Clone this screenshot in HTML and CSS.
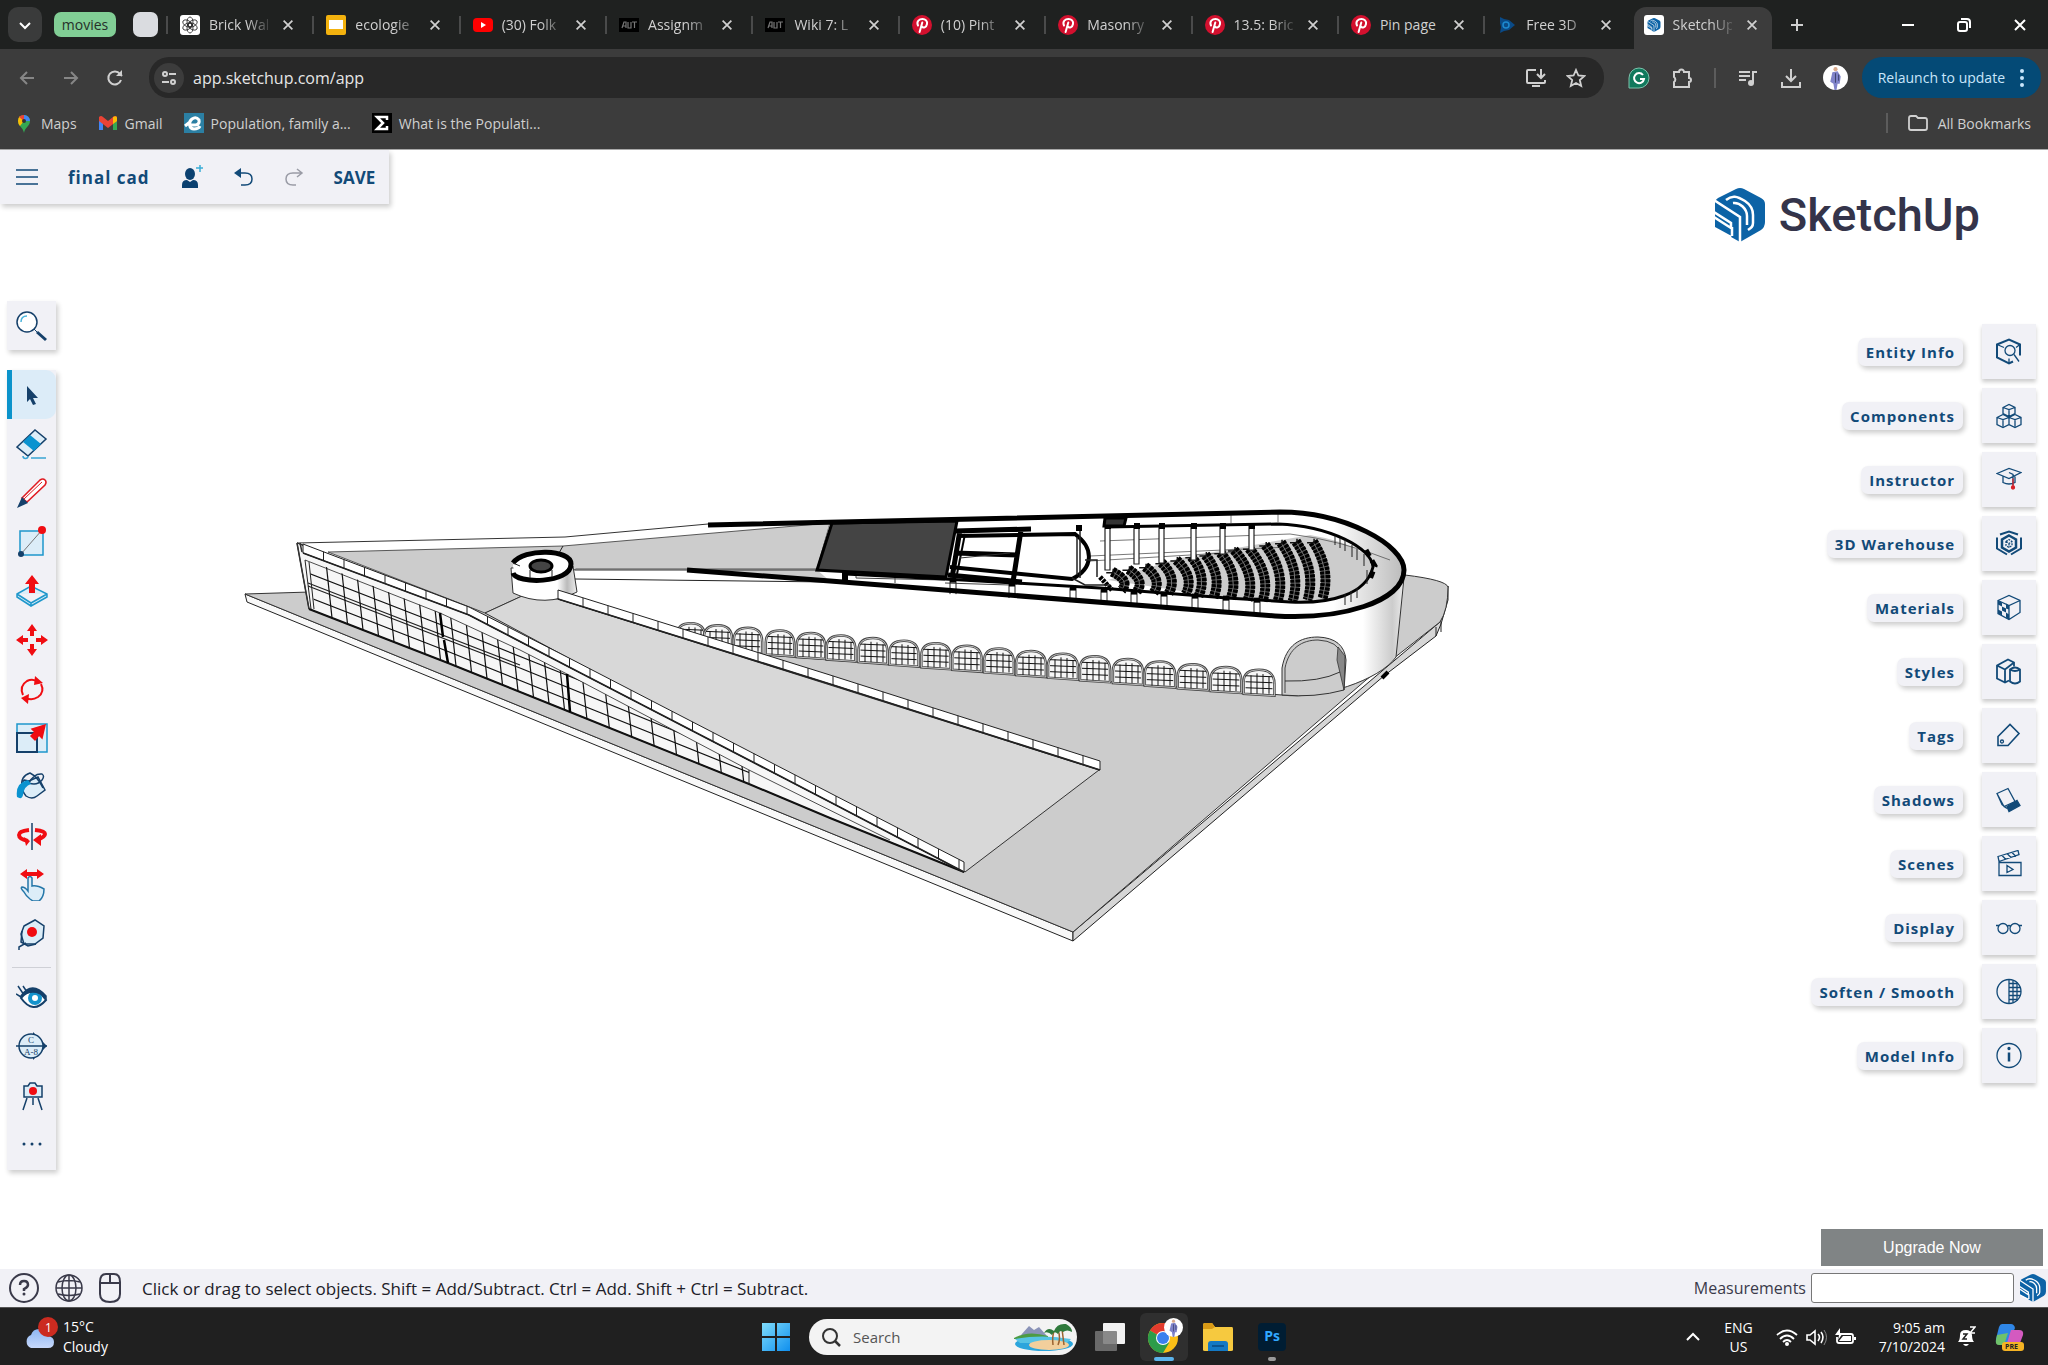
FILE: index.html
```html
<!DOCTYPE html>
<html lang="en">
<head>
    <meta charset="UTF-8">
    <meta name="viewport" content="width=device-width, initial-scale=1.0">
    <title>SketchUp</title>
    <link rel="stylesheet" href="styles.css">
</head>
<body>
    <!-- Shared symbols -->
    <svg class="defs" aria-hidden="true">
        <symbol id="close" viewBox="0 0 16 16"><path d="M3 3l10 10M13 3L3 13" stroke="currentColor" stroke-width="2" fill="none"/></symbol>
        <symbol id="pin" viewBox="0 0 20 20">
            <circle cx="10" cy="10" r="10" fill="#d3102e"/>
            <path d="M6 10.500C4 6 7.500 4 10.500 4s5 2.200 4.500 5c-.6 3.500-4 4.500-5 2.500M10.300 7.500L7.600 17" fill="none" stroke="#fff" stroke-width="2" stroke-linecap="round"/>
        </symbol>
        <symbol id="su" viewBox="0 0 50 54">
            <path d="M21 1q4-2 8 0l17 9q4 2 4 6v18q0 5-4 8L25 54 0 40V14q0-2 3-4z" fill="#0c63a6"/>
            <path d="M-1 12l26 17v26M-1 24l17 11v5L-1 29M-1 40l17 9M17 39v9M11 12c6-5 11-4 19 1 6 4 8 8 8 14v8c0 4-2 5-5 7M18 15c7-1 14 6 14 13v9" fill="none" stroke="#fff" stroke-width="2.500"/>
        </symbol>
        <symbol id="aut" viewBox="0 0 20 20">
            <rect y="3" width="20" height="14" fill="#000"/>
            <path d="M3 13l2-6h2v6M4 11h3M9 7v6h3V7M13 7h5M15.500 7v6" stroke="#777" stroke-width="1.200" fill="none"/>
        </symbol>
        <symbol id="person" viewBox="0 0 24 24">
            <circle cx="12" cy="12" r="12" fill="#fff"/>
            <path d="M9 7l5-1 3 5-1 7h-2l-1 6h-2l-1-6-3-2z" fill="#7f83c9"/>
            <circle cx="12" cy="4" r="2" fill="#d9a98b"/>
            <path d="M12 8v9M15 9v6" stroke="#3f4470" stroke-width="1"/>
        </symbol>
    </svg>

    <!-- Browser window -->
    <header class="browser">
        <div class="tab-strip">
            <button class="tab-search" aria-label="Search tabs"><svg width="14" height="14" viewBox="0 0 14 14"><path d="M2 5l5 5 5-5" fill="none" stroke="currentColor" stroke-width="2"/></svg></button>
            <span class="group">movies</span>
            <span class="group group-empty"></span>
            <div class="tabs">
                <div class="tab">
                    <svg class="fav" viewBox="0 0 20 20"><rect width="20" height="20" rx="3" fill="#fff"/><g fill="none" stroke="#222" stroke-width=".8"><ellipse cx="10" cy="7" rx="3" ry="5"/><ellipse cx="10" cy="7" rx="3" ry="5" transform="rotate(60 10 10)"/><ellipse cx="10" cy="7" rx="3" ry="5" transform="rotate(120 10 10)"/><ellipse cx="10" cy="7" rx="3" ry="5" transform="rotate(180 10 10)"/><ellipse cx="10" cy="7" rx="3" ry="5" transform="rotate(240 10 10)"/><ellipse cx="10" cy="7" rx="3" ry="5" transform="rotate(300 10 10)"/></g></svg>
                    <span class="tab-title">Brick Wal</span>
                    <button class="tab-close" aria-label="Close tab"><svg><use href="#close"/></svg></button>
                </div>
                <div class="tab">
                    <svg class="fav" viewBox="0 0 20 20"><rect width="20" height="20" rx="2" fill="#f3b20e"/><rect x="3" y="5" width="14" height="9" fill="#fff"/></svg>
                    <span class="tab-title">ecologie</span>
                    <button class="tab-close" aria-label="Close tab"><svg><use href="#close"/></svg></button>
                </div>
                <div class="tab">
                    <svg class="fav" viewBox="0 0 20 20"><rect y="3" width="20" height="14" rx="4" fill="#f00"/><path d="M8 7l5 3-5 3z" fill="#fff"/></svg>
                    <span class="tab-title">(30) Folk</span>
                    <button class="tab-close" aria-label="Close tab"><svg><use href="#close"/></svg></button>
                </div>
                <div class="tab">
                    <svg class="fav"><use href="#aut"/></svg>
                    <span class="tab-title">Assignm</span>
                    <button class="tab-close" aria-label="Close tab"><svg><use href="#close"/></svg></button>
                </div>
                <div class="tab">
                    <svg class="fav"><use href="#aut"/></svg>
                    <span class="tab-title">Wiki 7: L</span>
                    <button class="tab-close" aria-label="Close tab"><svg><use href="#close"/></svg></button>
                </div>
                <div class="tab">
                    <svg class="fav"><use href="#pin"/></svg>
                    <span class="tab-title">(10) Pint</span>
                    <button class="tab-close" aria-label="Close tab"><svg><use href="#close"/></svg></button>
                </div>
                <div class="tab">
                    <svg class="fav"><use href="#pin"/></svg>
                    <span class="tab-title">Masonry</span>
                    <button class="tab-close" aria-label="Close tab"><svg><use href="#close"/></svg></button>
                </div>
                <div class="tab">
                    <svg class="fav"><use href="#pin"/></svg>
                    <span class="tab-title">13.5: Bric</span>
                    <button class="tab-close" aria-label="Close tab"><svg><use href="#close"/></svg></button>
                </div>
                <div class="tab">
                    <svg class="fav"><use href="#pin"/></svg>
                    <span class="tab-title whole">Pin page</span>
                    <button class="tab-close" aria-label="Close tab"><svg><use href="#close"/></svg></button>
                </div>
                <div class="tab">
                    <svg class="fav" viewBox="0 0 20 20"><path d="M3 2l4 2 5 1 6 5-6 5-5 1-4 2 1-6-1-4z" fill="#0a4a86"/><circle cx="9" cy="10" r="3" fill="none" stroke="#1d8ad0" stroke-width="1.500"/></svg>
                    <span class="tab-title">Free 3D</span>
                    <button class="tab-close" aria-label="Close tab"><svg><use href="#close"/></svg></button>
                </div>
                <div class="tab active">
                    <svg class="fav" viewBox="0 0 20 20"><rect width="20" height="20" rx="3" fill="#fff"/><use href="#su" x="3" y="3" width="14" height="14"/></svg>
                    <span class="tab-title">SketchUp</span>
                    <button class="tab-close" aria-label="Close tab"><svg><use href="#close"/></svg></button>
                </div>
            </div>
            <button class="new-tab" aria-label="New tab"><svg width="14" height="14" viewBox="0 0 14 14"><path d="M7 1v12M1 7h12" stroke="currentColor" stroke-width="2"/></svg></button>
            <div class="window-buttons">
                <button aria-label="Minimize"><svg width="14" height="14" viewBox="0 0 14 14"><path d="M1 7h12" stroke="currentColor" stroke-width="2"/></svg></button>
                <button aria-label="Restore"><svg width="14" height="14" viewBox="0 0 14 14"><g fill="none" stroke="currentColor" stroke-width="2"><rect x="1" y="4" width="9" height="9" rx="2"/><path d="M4 1h6q3 0 3 3v6"/></g></svg></button>
                <button aria-label="Close"><svg width="16" height="16"><use href="#close"/></svg></button>
            </div>
        </div>

        <div class="address-bar">
            <button class="nav dim" aria-label="Back"><svg width="20" height="20" viewBox="0 0 20 20"><path d="M17 10H4M10 4l-6 6 6 6" fill="none" stroke="currentColor" stroke-width="2"/></svg></button>
            <button class="nav dim" aria-label="Forward"><svg width="20" height="20" viewBox="0 0 20 20"><path d="M3 10h13M10 4l6 6-6 6" fill="none" stroke="currentColor" stroke-width="2"/></svg></button>
            <button class="nav" aria-label="Reload"><svg width="20" height="20" viewBox="0 0 20 20"><path d="M16 12a6.500 6.500 0 1 1-1-6l2 2" fill="none" stroke="currentColor" stroke-width="2"/><path d="M17 2v6h-6z" fill="currentColor"/></svg></button>
            <div class="omnibox">
                <button class="site-info" aria-label="View site information"><svg width="18" height="18" viewBox="0 0 18 18"><g fill="none" stroke="currentColor" stroke-width="2"><circle cx="5" cy="5" r="2"/><path d="M9 5h7M2 13h7"/><circle cx="13" cy="13" r="2"/></g></svg></button>
                <input type="text" value="app.sketchup.com/app" aria-label="Address">
                <button class="nav" aria-label="Install app"><svg width="22" height="22" viewBox="0 0 22 22"><path d="M11 3H3q-1 0-1 1v11q0 1 1 1h16q1 0 1-1v-2M7 19h8M16 2v8M12 7l4 4 4-4" fill="none" stroke="currentColor" stroke-width="2"/></svg></button>
                <button class="nav" aria-label="Bookmark this tab"><svg width="20" height="20" viewBox="0 0 20 20"><path d="M10 2l2.400 5.500 6 .5-4.600 4 1.400 6L10 15l-5.200 3 1.400-6-4.600-4 6-.5z" fill="none" stroke="currentColor" stroke-width="1.800"/></svg></button>
            </div>
            <div class="extensions">
                <button aria-label="Grammarly"><svg width="22" height="22" viewBox="0 0 22 22"><path d="M1 21V11a10 10 0 1 1 10 10z" fill="#11795d" stroke="#7cc3ac" stroke-width="1"/><path d="M15 8a5 5 0 1 0 1 4h-4" fill="none" stroke="#fff" stroke-width="2"/></svg></button>
                <button aria-label="Extensions"><svg width="22" height="22" viewBox="0 0 22 22"><path d="M3 5h5a2.500 2.500 0 0 1 5 0h5v6a2 2 0 0 1 0 4v5H3v-5a3 3 0 0 0 0-5z" fill="none" stroke="currentColor" stroke-width="2"/></svg></button>
                <span class="divider"></span>
                <button aria-label="Media"><svg width="22" height="22" viewBox="0 0 22 22"><path d="M2 5h11M2 9h11M2 13h7M16 16V5h4" fill="none" stroke="currentColor" stroke-width="2"/><circle cx="14" cy="16" r="3" fill="currentColor"/></svg></button>
                <button aria-label="Downloads"><svg width="22" height="22" viewBox="0 0 22 22"><path d="M11 2v11M6 9l5 5 5-5M2 15v5h18v-5" fill="none" stroke="currentColor" stroke-width="2"/></svg></button>
                <button aria-label="Profile"><svg width="25" height="25"><use href="#person"/></svg></button>
            </div>
            <button class="relaunch">Relaunch to update <svg width="6" height="20" viewBox="0 0 6 20"><g fill="currentColor"><circle cx="3" cy="3" r="2"/><circle cx="3" cy="10" r="2"/><circle cx="3" cy="17" r="2"/></g></svg></button>
        </div>

        <nav class="bookmarks">
            <a href="#"><svg width="20" height="20" viewBox="0 0 20 20"><path d="M10 20c-1-6-6-7-6-12a6 6 0 0 1 12 0c0 5-5 6-6 12z" fill="#34a853"/><path d="M4 8a6 6 0 0 1 2-5l4 5-4 5q-2-2-2-5z" fill="#fbbc04"/><path d="M5 4a6 6 0 0 1 5-2v6z" fill="#ea4335"/><path d="M10 2a6 6 0 0 1 6 6h-6z" fill="#4285f4"/><circle cx="10" cy="8" r="2" fill="#333"/></svg>Maps</a>
            <a href="#"><svg width="20" height="20" viewBox="0 0 20 20"><path d="M1 17V5h4v12z" fill="#4285f4"/><path d="M15 17V5h4v12z" fill="#34a853"/><path d="M1 8V4q2-2 4 0l5 4 5-4q2-2 4 0v4l-9 7z" fill="#ea4335"/><path d="M15 4q4-2 4 1v3l-4 3z" fill="#fbbc04"/></svg>Gmail</a>
            <a href="#"><svg width="20" height="20" viewBox="0 0 20 20"><rect width="20" height="20" fill="#2b7fa3"/><path d="M5 12h7q4-1 3-5-3-4-7-1c-4 3-3 10 2 10 3 0 5-1 6-3M1 13l5-4" fill="none" stroke="#fff" stroke-width="3"/></svg>Population, family a...</a>
            <a href="#"><svg width="20" height="20" viewBox="0 0 20 20"><rect width="20" height="20" fill="#000"/><path d="M15 7V4H5l6 6-6 6h10v-3" fill="none" stroke="#fff" stroke-width="2.500"/></svg>What is the Populati...</a>
            <span class="divider"></span>
            <a href="#" class="all"><svg width="20" height="20" viewBox="0 0 20 20"><path d="M1 5q0-2 2-2h5l2 2h7q2 0 2 2v8q0 2-2 2H3q-2 0-2-2z" fill="none" stroke="currentColor" stroke-width="1.800"/></svg>All Bookmarks</a>
        </nav>
    </header>

    <!-- SketchUp -->
    <main class="app">
        <svg class="model" id="model" viewBox="0 150 2048 1119" role="img" aria-label="final cad model"></svg>

        <div class="app-bar">
            <button aria-label="Menu"><svg width="22" height="16" viewBox="0 0 22 16"><path d="M0 1h22M0 8h22M0 15h22" stroke="currentColor" stroke-width="1.500"/></svg></button>
            <h1>final cad</h1>
            <button aria-label="Share"><svg width="24" height="24" viewBox="0 0 24 24"><ellipse cx="10" cy="9" rx="5" ry="6" fill="#0b4170"/><path d="M2 23v-3q0-5 5-5l3 2 3-2q5 0 5 5v3z" fill="#0b4170"/><path d="M20 0v7M16 3h7" stroke="#3badd6" stroke-width="1.500"/></svg></button>
            <button aria-label="Undo"><svg width="20" height="20" viewBox="0 0 20 20"><path d="M3 6h8q7 0 7 6t-7 6H7" fill="none" stroke="currentColor" stroke-width="1.500"/><path d="M7 1v10L0 6z" fill="currentColor"/></svg></button>
            <button class="redo" aria-label="Redo"><svg width="20" height="20" viewBox="0 0 20 20"><path d="M17 6H9q-7 0-7 6t7 6h3M13 2l5 4-5 4" fill="none" stroke="currentColor" stroke-width="1.500"/></svg></button>
            <button class="save">SAVE</button>
        </div>

        <div class="brand"><svg width="50" height="54"><use href="#su"/></svg>SketchUp</div>

        <div class="tools">
            <button class="tool tool-search" aria-label="Search"><svg viewBox="0 0 32 32"><circle cx="11" cy="12" r="10" fill="#fff" stroke="#15406a" stroke-width="1.500"/><path d="M5 12q0-6 6-6" fill="none" stroke="#4bb4dc" stroke-width="1.500"/><path d="M18 19l4 4" stroke="#15406a"/><path d="M21 22l9 8" stroke="#15406a" stroke-width="3"/></svg></button>
            <div class="tool-list">
                <button class="tool selected" aria-label="Select"><svg viewBox="0 0 32 32"><path d="M11 7v16l3-3 3 6 3-1-3-6h5z" fill="#15406a"/></svg></button>
                <button class="tool" aria-label="Eraser"><svg viewBox="0 0 32 32"><path d="M1 19L19 2l11 9-18 17z" fill="#dcedf8" stroke="#15406a" stroke-width="1.500"/><path d="M7 14l7-7 11 9-7 7z" fill="#0a93d0"/><path d="M15 30h15M7 28a2 2 0 1 0 5 0" fill="none" stroke="#3aa5d4" stroke-width="1.500"/></svg></button>
                <button class="tool" aria-label="Line"><svg viewBox="0 0 32 32"><path d="M6 21L24 3q3-2 5 0t0 5L11 25z" fill="#fff" stroke="#e01b22" stroke-width="1.600"/><path d="M8 22L26 5" stroke="#e01b22"/><path d="M6 20l6 6-11 5z" fill="#15406a"/></svg></button>
                <button class="tool" aria-label="Rectangle"><svg viewBox="0 0 32 32"><path d="M4 5h23v24H4z" fill="#dcedf8" stroke="#1e97cb" stroke-width="1.500"/><path d="M5 28L26 4" stroke="#777"/><circle cx="26" cy="4" r="4" fill="#f00d12"/><circle cx="5" cy="28" r="3" fill="#15406a"/></svg></button>
                <button class="tool" aria-label="Push/Pull"><svg viewBox="0 0 32 32"><path d="M1 19l14-8 16 8v3l-16 9-14-9zM1 19l14 9 16-9M15 28v3" fill="#dcedf8" stroke="#1e97cb" stroke-width="1.500"/><path d="M13 18V9H9l7-9 7 9h-4v9z" fill="#f00d12"/></svg></button>
                <button class="tool" aria-label="Move"><svg viewBox="0 0 32 32"><path id="mv" d="M14 12V7h-3l5-7 5 7h-3v5z" fill="#f00d12"/><use href="#mv" transform="rotate(90 16 16)"/><use href="#mv" transform="rotate(180 16 16)"/><use href="#mv" transform="rotate(270 16 16)"/></svg></button>
                <button class="tool" aria-label="Rotate"><svg viewBox="0 0 32 32"><path d="M7 22q-4-9 4-14 6-3 11 1M25 11q4 8-3 13-6 4-12 1" fill="none" stroke="#f00d12" stroke-width="2"/><path d="M19 3l8 7-9 2zM13 21l-8 4 7 6z" fill="#f00d12"/></svg></button>
                <button class="tool" aria-label="Scale"><svg viewBox="0 0 32 32"><path d="M1 2h30v28H1z" fill="#dcedf8" stroke="#1e97cb" stroke-width="1.500"/><path d="M1 11h20v19H1z" fill="#dcedf8" stroke="#15406a" stroke-width="2"/><path d="M15 14l4-4-3-3 13-4-3 13-3-3-4 5z" fill="#f00d12" stroke="#f00d12" stroke-width="1.500"/></svg></button>
                <button class="tool" aria-label="Paint"><svg viewBox="0 0 32 32"><path d="M8 9l5 1 9-4 7 13-8 6q-5 4-11 0-5-6-4-12z" fill="#dcedf8" stroke="#15406a" stroke-width="1.500"/><path d="M6 17Q4 5 14 2q8 4 13 15M13 12q5-10 13-9 3 2 0 6-5 6-13 3" fill="none" stroke="#15406a" stroke-width="1.500"/><path d="M1 26q-2-14 11-17l3 4q-7 2-8 11-1 5-6 2z" fill="#0a93d0"/></svg></button>
                <button class="tool" aria-label="Flip"><svg viewBox="0 0 32 32"><path d="M13 10q-10 1-10 5t9 6M19 10q10 1 10 4t-8 6" fill="none" stroke="#f00d12" stroke-width="4"/><path d="M25 14v12l-8-6zM8 17l6 4-4 5z" fill="#f00d12"/><path d="M16 3v27" stroke="#15406a" stroke-width="1.500"/></svg></button>
                <button class="tool" aria-label="Interact"><svg viewBox="0 0 32 32"><path d="M14 30q-4-3-6-7-4-4-2-5 3 0 6 4V9q2-3 4 0v8q5-1 12 3 0 8-5 12h-6z" fill="#dcedf8" stroke="#2476a8" stroke-width="1.500"/><path d="M4 5l7-5v3h10V0l7 5-7 5V7H11v3z" fill="#f00d12"/></svg></button>
                <button class="tool" aria-label="Tape Measure"><svg viewBox="0 0 32 32"><path d="M8 8l11-6 9 6-1 12-8 6H8L5 16z" fill="#dcedf8" stroke="#15406a" stroke-width="1.500"/><path d="M6 13l-1 11 7 4 8-2M10 25L3 29v3" fill="none" stroke="#15406a" stroke-width="1.500"/><circle cx="16" cy="14" r="5" fill="#f00d12"/></svg></button>
                <hr>
                <button class="tool" aria-label="Orbit"><svg viewBox="0 0 32 32"><path d="M5 17q13-15 25 2-13 15-25-2z" fill="#fff" stroke="#15406a" stroke-width="2"/><circle cx="19" cy="17" r="7" fill="#1493cc"/><circle cx="19" cy="17" r="3" fill="#fff"/><path d="M5 15Q16-1 30 15v2Q19 6 5 15zM8 14L2 5M11 11L7 5M5 16l-5-3" fill="#15406a" stroke="#15406a" stroke-width="1.500"/></svg></button>
                <button class="tool" aria-label="Section Plane"><svg viewBox="0 0 32 32"><path d="M17 2l14 14-14 14z" fill="#15406a"/><circle cx="15" cy="16" r="12" fill="#dcedf8" stroke="#15406a" stroke-width="1.500"/><path d="M0 16h31" stroke="#15406a" stroke-width="1.500"/><text x="12" y="13" class="tiny">C</text><text x="8" y="25" class="tiny">A-8</text></svg></button>
                <button class="tool" aria-label="Position Camera"><svg viewBox="0 0 32 32"><path d="M8 7h4l2-3h5l2 3h5v11H8z" fill="#dcedf8" stroke="#15406a" stroke-width="1.500"/><path d="M11 19L7 31M17 19v7M22 19l4 12" stroke="#15406a" stroke-width="1.500"/><circle cx="17" cy="12" r="4" fill="#f00d12"/></svg></button>
                <button class="tool" aria-label="More tools"><svg viewBox="0 0 32 32"><g fill="#15406a"><circle cx="8" cy="16" r="1.500"/><circle cx="16" cy="16" r="1.500"/><circle cx="24" cy="16" r="1.500"/></g></svg></button>
            </div>
        </div>

        <div class="panels">
            <button class="panel"><span>Entity Info</span><svg viewBox="0 0 26 26"><path d="M24 17V6L13 1 1 6v13l12 6 4-2" stroke-width="2"/><path d="M1 6l7 3M24 6l-4 3M13 20v5M18 16l5 7"/><circle cx="14" cy="12" r="5"/></svg></button>
            <button class="panel"><span>Components</span><svg viewBox="0 0 26 26"><path d="M7 5l6-3 6 3v6l-6 3-6-3zM7 5l6 2 6-2M13 7v7M1 15l6-3 6 3v7l-6 3-6-3zM1 15l6 2 6-2M7 17v7M13 15l6-3 6 3v7l-6 3-6-3zM13 15l6 2 6-2M19 17v7"/></svg></button>
            <button class="panel"><span>Instructor</span><svg viewBox="0 0 26 26"><path d="M1 7l12-5 12 4-12 6zM7 10v6q6 3 12 0v-6M13 6l4 2v11"/><path d="M17 12v8" stroke="#d92128"/><circle cx="17" cy="21" r="1.500" fill="#d92128" stroke="#d92128"/></svg></button>
            <button class="panel"><span>3D Warehouse</span><svg viewBox="0 0 26 26"><path d="M4 4l9-3 9 3M1 7v11l10 6M25 7v11l-10 6" stroke-width="2"/><path d="M13 5l7 4v8l-7 4-7-4V9z" stroke-width="2.500"/><path d="M10 11l3-2 3 2v4l-3 2-3-2zM10 11l3 2 3-2M13 13v4" stroke-dasharray="2 1"/></svg></button>
            <button class="panel"><span>Materials</span><svg viewBox="0 0 26 26"><path d="M2 6l11-5 11 5v12l-11 7-11-6zM2 6l11 5 11-5M13 11v14"/><path d="M2 6l4 2v4l-4-2zM6 12l4 2v4l-4-2zM10 9l3 2v4l-3-1zM2 15l4 2v4l-4-2zM10 18l3 2v5l-3-2z" fill="#124a78" stroke="none"/></svg></button>
            <button class="panel"><span>Styles</span><svg viewBox="0 0 26 26"><path d="M13 22l-4 2-8-4V7l11-6 6 3v4M1 7l8 4 9-7M9 11v13" stroke-width="1.800"/><path d="M14 11q5-4 10 0v12q-5 4-10 0zM14 11q5 3 10 0" fill="#f1f1f6" stroke-width="1.800"/></svg></button>
            <button class="panel"><span>Tags</span><svg viewBox="0 0 26 26"><path d="M2 23v-9L14 2l9 9-11 12z" stroke-width="1.600"/><circle cx="6" cy="19" r="1.500"/></svg></button>
            <button class="panel"><span>Shadows</span><svg viewBox="0 0 26 26"><path d="M11 20l10-6 3 5-11 6z" fill="#124a78"/><path d="M1 7l11-5 7 13-11 5zM1 7l5 11 5 4M8 20l3 2"/></svg></button>
            <button class="panel"><span>Scenes</span><svg viewBox="0 0 26 26"><path d="M3 12h22v13H3zM2 6l20-6 1 4L3 11zM6 5l4 4M11 3l4 4M16 2l4 4M11 15l6 4-6 3z"/></svg></button>
            <button class="panel"><span>Display</span><svg viewBox="0 0 26 26"><circle cx="7" cy="14" r="5"/><circle cx="19" cy="14" r="5"/><path d="M0 11h3M11 12q2-2 4 0M23 11h3"/></svg></button>
            <button class="panel"><span>Soften / Smooth</span><svg viewBox="0 0 26 26"><circle cx="13" cy="13" r="12"/><path d="M13 1v24M17 2v22M21 4v18M13 5h8M13 9h11M13 13h12M13 17h11M13 21h8"/></svg></button>
            <button class="panel"><span>Model Info</span><svg viewBox="0 0 26 26"><circle cx="13" cy="13" r="12"/><path d="M13 10v9" stroke-width="2.500"/><circle cx="13" cy="6" r="1" fill="#124a78"/></svg></button>
        </div>

        <button class="upgrade">Upgrade Now</button>
    </main>

    <footer class="status">
        <button aria-label="Help"><svg width="30" height="30" viewBox="0 0 30 30"><circle cx="15" cy="15" r="14" fill="none" stroke="currentColor" stroke-width="2"/><path d="M11 12q0-4 4-4t4 4q0 2-4 4v2" fill="none" stroke="currentColor" stroke-width="2.500"/><circle cx="15" cy="21" r="1.500" fill="currentColor"/></svg></button>
        <button aria-label="Language"><svg width="30" height="30" viewBox="0 0 30 30"><g fill="none" stroke="currentColor" stroke-width="1.500"><circle cx="15" cy="15" r="13"/><ellipse cx="15" cy="15" rx="7" ry="13"/><path d="M15 2v26M2 15h26M4 9q11-3 22 0M4 21q11 3 22 0"/></g></svg></button>
        <button aria-label="Mouse"><svg width="22" height="30" viewBox="0 0 22 30"><path d="M1 9q0-8 6-8h8q6 0 6 8v12q0 8-10 8T1 21zM1 10h20M11 1v9" fill="none" stroke="currentColor" stroke-width="2"/></svg></button>
        <p>Click or drag to select objects. Shift = Add/Subtract. Ctrl = Add. Shift + Ctrl = Subtract.</p>
        <label for="measurements">Measurements</label>
        <input type="text" id="measurements">
        <svg width="26" height="28"><use href="#su"/></svg>
    </footer>

    <!-- Windows taskbar -->
    <div class="taskbar">
        <div class="weather">
            <svg width="36" height="36" viewBox="0 0 36 36"><defs><linearGradient id="cl" x2="0" y2="1"><stop offset="0" stop-color="#8db6f2"/><stop offset="1" stop-color="#c6d8fb"/></linearGradient></defs><path d="M8 31a7 7 0 0 1 0-13q2-7 10-6 6 1 7 7 6 1 6 6 0 6-6 6z" fill="url(#cl)"/><circle cx="25" cy="10" r="10" fill="#cb2b20"/><text x="22" y="15">1</text></svg>
            <div>15°C<br>Cloudy</div>
        </div>
        <div class="pinned">
            <button aria-label="Start"><svg width="30" height="30" viewBox="0 0 30 30"><defs><linearGradient id="wn" x2="1" y2="1"><stop offset="0" stop-color="#7fdcfb"/><stop offset="1" stop-color="#0f8fee"/></linearGradient></defs><path d="M1 1h13v13H1zM16 1h13v13H16zM1 16h13v13H1zM16 16h13v13H16z" fill="url(#wn)"/></svg></button>
            <div class="search">
                <svg width="20" height="20" viewBox="0 0 20 20"><circle cx="9" cy="9" r="7" fill="none" stroke="#333" stroke-width="2"/><path d="M14 14l5 5" stroke="#333" stroke-width="2.500"/></svg>
                <input type="text" placeholder="Search" aria-label="Search">
                <svg width="60" height="32" viewBox="0 0 60 32"><path d="M8 14l8-9 5 4 5-3 8 9z" fill="#8a93b8"/><path d="M1 17q14-8 34-2v3H1z" fill="#4d9b43"/><ellipse cx="31" cy="23" rx="29" ry="7" fill="#2ba5dc"/><path d="M2 18q27-5 56 0l-4 4H7z" fill="#56c3e4"/><ellipse cx="36" cy="24" rx="20" ry="5" fill="#f2cf9c"/><path d="M40 24q-1-8 1-14M51 24q-1-8-2-16M45 24q3-7 0-15" fill="none" stroke="#9a6330" stroke-width="1.500"/><path d="M31 12q4-7 10-2 3-8 12-7 6 3 6 8-5-3-9 0-3-3-5 2-4-4-6 1-4-4-8-2z" fill="#2f7a3c"/></svg>
            </div>
            <button aria-label="Task view"><svg width="32" height="30" viewBox="0 0 32 30"><rect x="9" y="1" width="22" height="21" rx="1" fill="#f2f2f2"/><rect x="1" y="9" width="22" height="20" rx="1" fill="#777" fill-opacity=".85"/></svg></button>
            <button class="running" aria-label="Chrome"><svg width="38" height="38" viewBox="0 0 38 38"><circle cx="18" cy="20" r="15" fill="#fbbf17"/><path d="M18 20L5 12.500a15 15 0 0 1 26 0z" fill="#e33b2e"/><path d="M18 20L5 12.500A15 15 0 0 0 18 35l6-10z" fill="#2c9c49"/><circle cx="18" cy="20" r="7" fill="#fff"/><circle cx="18" cy="20" r="6" fill="#3b80ee"/><use href="#person" x="19" y="0" width="19" height="19"/></svg></button>
            <button aria-label="File Explorer"><svg width="32" height="30" viewBox="0 0 32 30"><path d="M1 3q0-2 2-2h7l3 4h17q1 0 1 2v21q0 1-2 1H3q-2 0-2-1z" fill="#f6c93f"/><path d="M1 3q0-2 2-2h7l3 4-3 2H1z" fill="#d99a16"/><path d="M6 22q0-3 3-3h14q3 0 3 3v7H6z" fill="#1379c4"/><path d="M10 24h12" stroke="#0a4a80" stroke-width="1.500"/></svg></button>
            <button class="idle" aria-label="Photoshop"><span class="ps">Ps</span></button>
        </div>
        <div class="tray">
            <button aria-label="Show hidden icons"><svg width="16" height="16" viewBox="0 0 16 16"><path d="M2 11l6-6 6 6" fill="none" stroke="currentColor" stroke-width="2"/></svg></button>
            <div class="lang">ENG<br>US</div>
            <svg width="22" height="22" viewBox="0 0 22 22"><path d="M1 9q10-9 20 0M4 13q7-7 14 0M7 16q4-4 8 0" fill="none" stroke="currentColor" stroke-width="1.800"/><circle cx="11" cy="18" r="2" fill="currentColor"/></svg>
            <svg width="22" height="22" viewBox="0 0 22 22"><path d="M2 9h3l5-4v13l-5-4H2zM13 8q3 3 0 7M16 6q4 5 0 11" fill="none" stroke="currentColor" stroke-width="1.600"/><path d="M19 4q5 7 0 15" fill="none" stroke="#888" stroke-width="1"/></svg>
            <svg width="22" height="22" viewBox="0 0 22 22"><path d="M5 8h12q2 0 2 2v5q0 2-2 2H5q-2 0-2-2v-4" fill="none" stroke="currentColor" stroke-width="1.800"/><path d="M9 10h8v5H5zM20 11h2v3h-2zM6 2L1 9h4l-1 5 5-7H6z" fill="currentColor"/></svg>
            <div class="clock">9:05 am<br>7/10/2024</div>
            <svg width="20" height="22" viewBox="0 0 20 22"><path d="M2 16q2-2 2-7 0-5 6-5 5 0 6 5 0 5 2 7z" fill="currentColor"/><path d="M7 18q3 4 6 0z" fill="currentColor"/><path d="M7 8h4l-4 5h4" fill="none" stroke="#202020" stroke-width="1.500"/><path d="M14 1h5l-5 6h5" fill="none" stroke="currentColor" stroke-width="1.500"/></svg>
            <svg width="30" height="30" viewBox="0 0 30 30"><path d="M7 2h9q3 0 4 4l-7 16H4q-4 0-3-5l3-12q1-3 3-3z" fill="#2f86e6"/><path d="M2 13l11-2-4 12H4q-4 0-3-5z" fill="#6fc26b"/><path d="M16 8h8q5 0 4 5l-3 8H12z" fill="#d45ac0"/><rect x="7" y="20" width="22" height="9" rx="3" fill="#f5b324"/><text x="10" y="27" class="pre">PRE</text></svg>
        </div>
    </div>

    <script src="model.js"></script>
</body>
</html>
```
FILE: styles.css
```css
* {
    margin: 0;
    padding: 0;
    box-sizing: border-box;
}

body {
    font-family: "Open Sans", "Noto Sans", sans-serif;
    font-size: 14px;
    background: #fff;
    color: #202124;
    min-height: 100vh;
    display: flex;
    flex-direction: column;
    overflow: hidden;
}

button {
    flex: none;
    font: inherit;
    color: inherit;
    background: none;
    border: none;
    cursor: pointer;
    display: flex;
    align-items: center;
    justify-content: center;
}

input {
    font: inherit;
    color: inherit;
    border: none;
    outline: none;
    background: none;
    min-width: 0;
}

a {
    color: inherit;
    text-decoration: none;
}

svg {
    flex: none;
    display: block;
}

.defs {
    position: absolute;
    width: 0;
    height: 0;
}

/* Browser */
.browser {
    background: #3c3c3c;
    color: #d0d0d0;
    border-bottom: 1px solid #a9a9a9;
}

.tab-strip {
    display: flex;
    align-items: center;
    height: 49px;
    padding-left: 8px;
    background: #1f2120;
}

.tab-search {
    width: 34px;
    height: 35px;
    border-radius: 10px;
    background: #3a3b3b;
    color: #fff;
}

.group {
    flex: none;
    width: 62px;
    height: 25px;
    margin-left: 12px;
    border-radius: 7px;
    background: #81ce95;
    color: #26302a;
    line-height: 25px;
    text-align: center;
}

.group-empty {
    width: 25px;
    margin-left: 17px;
    background: #dadce0;
}

.tabs {
    flex: 1;
    min-width: 0;
    display: flex;
    align-self: stretch;
    margin-left: 8px;
}

.tab {
    flex: 1;
    min-width: 0;
    display: flex;
    align-items: center;
    padding: 0 12px;
    border-left: 2px solid transparent;
    border-image: linear-gradient(#1f2120 16px, #4a4b4b 16px, #4a4b4b 34px, #1f2120 34px) 1;
    border-right: 0;
}

.tab.active {
    margin: 7px 6px 0 4px;
    padding: 0 8px 7px 10px;
    border: none;
    border-radius: 12px 12px 0 0;
    background: #3c3c3c;
}

.fav {
    width: 20px;
    height: 20px;
}

.tab-title {
    flex: 1;
    min-width: 0;
    margin-left: 9px;
    overflow: hidden;
    white-space: nowrap;
    mask-image: linear-gradient(90deg, #000 65%, rgba(0, 0, 0, 0.2));
}

.tab-title.whole {
    mask-image: none;
}

.tab-close {
    width: 24px;
    height: 24px;
    margin-left: 8px;
}

.tab-close svg {
    width: 14px;
    height: 14px;
}

.new-tab {
    width: 38px;
    height: 38px;
    margin-right: 64px;
}

.window-buttons {
    flex: none;
    display: flex;
    align-self: stretch;
    color: #fff;
}

.window-buttons button {
    width: 56px;
}

.address-bar {
    display: flex;
    align-items: center;
    height: 57px;
    padding: 0 7px;
}

.nav {
    width: 40px;
    height: 40px;
}

.address-bar > .nav {
    margin-right: 4px;
}

.dim {
    opacity: 0.5;
}

.omnibox {
    flex: 1;
    display: flex;
    align-items: center;
    height: 41px;
    margin-left: 10px;
    padding: 0 8px 0 5px;
    border-radius: 20px;
    background: #282828;
}

.omnibox input {
    flex: 1;
    margin-left: 9px;
    font-size: 16px;
    color: #e6e6e6;
}

.site-info {
    width: 30px;
    height: 30px;
    border-radius: 50%;
    background: #3c3c3c;
}

.extensions {
    display: flex;
    align-items: center;
    gap: 21px;
    margin: 0 14px 0 24px;
}

.divider {
    width: 2px;
    height: 20px;
    background: #5c5c5c;
}

.relaunch {
    gap: 14px;
    height: 41px;
    padding: 0 16px;
    border-radius: 20px;
    background: #044a76;
    color: #c9e6fb;
}

.bookmarks {
    display: flex;
    align-items: center;
    height: 43px;
    padding: 0 17px 9px 14px;
}

.bookmarks a {
    display: flex;
    align-items: center;
    gap: 7px;
    margin-right: 21px;
}

.bookmarks .divider {
    margin: 0 20px 0 auto;
}

.bookmarks .all {
    gap: 10px;
    margin-right: 0;
}

/* Application */
.app {
    flex: 1;
    position: relative;
    display: flex;
    justify-content: space-between;
    background: #fff;
    color: #124a78;
}

.model {
    position: absolute;
    top: 0;
    left: 0;
    width: 100%;
    height: 100%;
}

.app-bar {
    position: absolute;
    top: 0;
    left: 0;
    display: flex;
    align-items: center;
    gap: 30px;
    height: 54px;
    padding: 0 14px 0 16px;
    background: #f1f1f6;
    box-shadow: 2px 3px 5px rgba(0, 0, 0, 0.2);
}

.app-bar h1 {
    font-size: 17px;
    letter-spacing: 1px;
}

.app-bar .redo {
    color: #9a9ca6;
}

.app-bar .save {
    font-size: 17px;
    font-weight: 700;
}

.brand {
    position: absolute;
    top: 37px;
    right: 68px;
    display: flex;
    align-items: center;
    gap: 14px;
    font-family: Roboto, sans-serif;
    font-size: 47px;
    font-weight: 500;
    color: #34344a;
}

.tools {
    position: relative;
    padding: 151px 0 0 7px;
}

.tool {
    width: 49px;
    height: 49px;
}

.tool svg {
    width: 32px;
    height: 32px;
}

.tool-search,
.tool-list {
    background: #f1f1f6;
    box-shadow: 2px 3px 5px rgba(0, 0, 0, 0.2);
}

.tool-list {
    margin-top: 20px;
    padding-bottom: 2px;
}

.selected {
    border-left: 5px solid #0b93cb;
    border-radius: 0 10px 10px 0;
    background: #dcecf8;
    padding-right: 5px;
}

.tool-list hr {
    margin: 9px 5px 4px;
    border: none;
    border-top: 1px solid #cfd0d6;
}

.tiny {
    font-family: "Liberation Serif", serif;
    font-size: 9px;
    fill: #15406a;
}

.panels {
    position: relative;
    display: flex;
    flex-direction: column;
    gap: 9px;
    padding: 174px 12px 0 0;
}

.panel {
    justify-content: flex-end;
    gap: 19px;
}

.panel span {
    height: 28px;
    padding: 0 8px;
    border-radius: 7px;
    background: #f1f1f6;
    box-shadow: 2px 3px 5px rgba(0, 0, 0, 0.2);
    font-size: 15px;
    font-weight: 700;
    line-height: 28px;
    letter-spacing: 1px;
}

.panel svg {
    width: 54px;
    height: 55px;
    padding: 14px;
    background: #f1f1f6;
    box-shadow: 0 3px 4px rgba(0, 0, 0, 0.2);
    fill: none;
    stroke: #124a78;
    stroke-width: 1.3;
}

.upgrade {
    position: absolute;
    right: 5px;
    bottom: 3px;
    width: 222px;
    height: 37px;
    background: #808485;
    color: #fff;
    font-family: "Liberation Sans", Arial, sans-serif;
    font-size: 16px;
}

.status {
    display: flex;
    align-items: center;
    height: 38px;
    padding: 0 2px 0 9px;
    background: #f1f1f6;
    color: #3a3a4a;
    font-size: 16px;
}

.status button {
    margin-right: 15px;
}

.status p {
    flex: 1;
    margin-left: 6px;
    font-size: 17px;
    color: #202028;
}

.status input {
    width: 203px;
    height: 30px;
    margin: 0 6px 0 5px;
    padding: 0 6px;
    border: 1px solid #777;
    border-radius: 3px;
    background: #fff;
}

/* Taskbar */
.taskbar {
    display: grid;
    grid-template-columns: 1fr auto 1fr;
    align-items: center;
    height: 58px;
    padding: 0 23px;
    border-top: 1px solid #555;
    background: #202020;
    color: #fff;
}

.weather {
    display: flex;
    gap: 4px;
    line-height: 20px;
}

.weather text {
    font-size: 12px;
    fill: #fff;
}

.pinned,
.search,
.tray {
    display: flex;
    align-items: center;
}

.pinned {
    gap: 6px;
}

.pinned button {
    position: relative;
    width: 48px;
    height: 48px;
    border-radius: 6px;
}

.search {
    width: 268px;
    height: 36px;
    margin: 0 3px;
    padding: 0 4px 0 12px;
    border-radius: 18px;
    background: #f3f3f3;
}

.search input {
    flex: 1;
    margin-left: 12px;
    font-size: 15px;
}

.search input::placeholder {
    color: #555;
}

.pinned .running {
    background: #2f2f2f;
}

.running::after,
.idle::after {
    content: "";
    position: absolute;
    bottom: 0;
    width: 20px;
    height: 4px;
    border-radius: 2px;
    background: #5bb4ec;
}

.idle::after {
    width: 8px;
    background: #9a9a9a;
}

.ps {
    width: 28px;
    height: 28px;
    border-radius: 4px;
    background: #001d33;
    color: #31a8ff;
    font-weight: 700;
    line-height: 26px;
}

.tray {
    justify-content: flex-end;
    gap: 7px;
    line-height: 19px;
}

.lang {
    margin: 0 16px;
    text-align: center;
}

.clock {
    margin: 0 4px 0 16px;
    text-align: right;
}

.tray > svg:last-child {
    margin-left: 12px;
}

.pre {
    font-size: 7px;
    font-weight: 700;
    fill: #222;
}
```
FILE: model.js
```js
const parts = [];

function path(d, fill, stroke, width, extra) {
    parts.push(`<path d="${d}" fill="${fill || 'none'}" stroke="${stroke || '#222'}" stroke-width="${width || 1}" ${extra || ''}/>`);
}

// y on a polyline at a given x
function yAt(points, x) {
    for (let i = 1; i < points.length; i++) {
        const [x0, y0] = points[i - 1];
        const [x1, y1] = points[i];
        if (x <= x1 || i === points.length - 1) {
            return y0 + (y1 - y0) * (x - x0) / (x1 - x0);
        }
    }
}

function toPath(points) {
    return 'M' + points.map(p => p.join(' ')).join('L');
}

parts.push(`<defs>
    <linearGradient id="wall"><stop offset="0" stop-color="#fff"/><stop offset=".95" stop-color="#fff"/><stop offset=".985" stop-color="#ccc"/><stop offset="1" stop-color="#eee"/></linearGradient>
    <linearGradient id="tower"><stop offset="0" stop-color="#fff"/><stop offset=".7" stop-color="#fff"/><stop offset=".85" stop-color="#bbb"/><stop offset="1" stop-color="#eee"/></linearGradient>
    <linearGradient id="inner"><stop offset="0" stop-color="#fff"/><stop offset=".88" stop-color="#fff"/><stop offset="1" stop-color="#bbb"/></linearGradient>
</defs>`);

// Ground slab
path('M245 594L247 602L1073 941V932Z', '#f8f8f8');
path('M1073 932V941L1385 675L1436 636L1441 624L1448 600V586L1440 622Z', '#d6d6d6');
path('M245 594L310 592L700 560L1405 575Q1446 580 1448 587Q1448 610 1440 622L1366 680L1073 932Z', '#ccc', '#333');
path('M1441 622V632M1436 627V636', '', '#222', 1);

// Main building wall
path('M575 560L687 570L1275 616L1405 575L1396 657C1380 680 1320 700 1282 695L766 655L560 595Z', 'url(#wall)', 'none');
path('M1404 578L1396 657C1380 680 1320 700 1282 695L766 655', '', '#333');
path('M575 569H817M575 579L830 582M624 569V565L690 567');

// Arched windows along the base
const arches = [691, 718, 748, 780, 811, 841, 873, 904, 936, 967, 999, 1031, 1063, 1095, 1128, 1160, 1193, 1226, 1259];
arches.forEach((x, i) => {
    const base = 657 + (x - 811) * 0.082;
    const top = base - 24;
    const r = 14 + i * 0.08;
    const shape = `M${x - r} ${base}V${top + 12}Q${x - r} ${top} ${x} ${top}T${x + r} ${top + 14}V${base + 2}Z`;
    path(shape, '#f6f6f6', '#444', 2.5);
    path(shape, 'none', '#ddd', .8);
    for (const dx of [-8, -2, 4, 10]) {
        path(`M${x + dx} ${top + 3 + Math.abs(dx) / 3}V${base}`, '', '#111', 1);
    }
    for (const dy of [6, 12, 18]) {
        path(`M${x - r + 2} ${top + dy}L${x + r - 2} ${top + dy + 1}`, '', '#111', 1);
    }
});

// Entrance arch
path('M1282 695V668C1286 645 1300 637 1318 637Q1344 638 1346 660L1344 690Q1315 698 1282 695Z', '#ccc', '#333', 1);
path('M1285 693V668C1289 648 1302 640 1318 640Q1338 641 1342 655', '', '#444');
path('M1285 681Q1320 682 1340 672', '', '#333');
path('M1338 647L1345 656L1344 690L1337 660Z', '#888', '#333', .8);

// Roof on the left
path('M297 543L565 537L708 524H835L817 570H575L560 560L487 613L303 545Z', '#fff', '#333');
path('M328 552L563 546L830 523L817 569H576L522 596L485 613Z', '#ccc', '#333', .8);
path('M563 546L559 553');

// Ramp
path('M485 613L522 596L558 599L1099 770L965 872Z', '#d8d8d8', '#333');

// Round stair tower
path('M511 568L513 593Q545 608 577 592L573 566Z', 'url(#tower)', '#333');
parts.push('<ellipse cx="542" cy="566" rx="29" ry="13" fill="#fff" stroke="none"/>');
path('M513 573C516 584 571 584 571 564C571 549 524 548 513 563', '', '#000', 5);
parts.push('<ellipse cx="541" cy="566" rx="11" ry="6" fill="#444" stroke="#000" stroke-width="3"/>');
path('M513 563L520 566M530 570V578M552 570V577');

// Railings are split into panels by posts
function railing(top, bottom, step) {
    path(toPath(top) + 'L' + [...bottom].reverse().map(p => p.join(' ')).join('L') + 'Z', '#fff', '#222');
    path(toPath(bottom), '', '#222', 1.8);
    const end = top[top.length - 1][0];
    for (let x = top[0][0] + step; x < end; x += step) {
        path(`M${x} ${yAt(top, x)}V${yAt(bottom, x)}`);
    }
}

// Glazed facade
const roofLine = [[297, 543], [469, 615], [569, 667], [830, 802], [964, 872]];
const sill = [[309, 609], [448, 663], [570, 712], [749, 784], [830, 818], [964, 872]];
const head = [[305, 560], [440, 613], [520, 650], [567, 674], [749, 770]];
path(toPath(roofLine) + 'L830 818L749 784L570 712L448 663L309 609Z', '#f6f6f6');
path('M305 560L311 609M309 562L314 609');
path(toPath([...head, [890, 840]]), '', '#222', .8);
path(toPath(sill), '', '#111', 2);
path('M308 583L520 665M308 586L520 668', '', '#222', 1.2);
parts.push('<clipPath id="glass"><path d="M309 560L440 613L520 650L567 674L749 770V785L570 712L448 663L315 611Z"/></clipPath>');
[12, 37].forEach(dy => {
    path(toPath(sill.map(([x, y]) => [x - dy / 10, y - dy])), '', '#111', 1.2, 'clip-path="url(#glass)"');
});
path('M520 668L749 761', '', '#111', 1.2, 'clip-path="url(#glass)"');
for (let x = 332; x < 750; x += x < 560 ? 15.5 : 22.4) {
    path(`M${x} ${yAt(sill, x)}L${x - 6} ${yAt(sill, x) - 56}`, '', '#111', 1.2, 'clip-path="url(#glass)"');
}
path('M440 613L443 637M444 640L448 663M567 674L570 712', '', '#000', 2.5);
path('M749 770V784');

railing([[558, 590], [830, 675], [1100, 761]], [[558, 599], [830, 684], [1100, 770]], 25);
railing([[303, 544], [469, 607], [569, 658], [830, 793], [964, 862]], [[303, 553], [469, 615], [569, 667], [830, 802], [964, 872]], 20.5);
path('M297 543L309 609M300 543L302 552', '', '#333', 1.5);

// Open roof of the main building
path('M817 570L830 523L1280 512C1345 512 1404 545 1404 570C1404 602 1340 620 1275 616L830 581Z', 'url(#inner)', 'none');
path('M1108 580L1180 558L1310 535Q1368 545 1374 568Q1360 600 1300 602L1227 598Z', '#ccc', 'none');
path('M1090 556L1290 547M1090 561L1240 552M1100 541L1290 534Q1340 540 1390 560M1231 515V523M1278 514V522', '', '#555', .8);
path('M856 578L945 580M856 578V574M895 576V583M945 583L1010 585', '', '#444');

// Seat rows
const rows = [
    [740, 245, 755, 300], [778, 238, 790, 305], [817, 230, 830, 308], [855, 218, 865, 310],
    [890, 210, 905, 312], [925, 200, 935, 318], [958, 195, 970, 322], [993, 188, 1010, 325],
    [1025, 180, 1050, 330], [1060, 175, 1085, 332], [1098, 165, 1120, 334], [1135, 158, 1155, 334],
    [1170, 155, 1190, 330], [1210, 155, 1225, 325]
];
rows.forEach(([u0, v0, u1, v1]) => {
    const x0 = 800 + u0 / 2.34, y0 = 490 + v0 / 3, x1 = 800 + u1 / 2.34, y1 = 490 + v1 / 3;
    const curve = `M${x0 - 4} ${y0}Q${x1 + 8} ${(y0 + y1) / 2} ${x1 - 1} ${y1}`;
    path(curve, '', '#555', 9);
    path(curve, '', '#000', 10, 'stroke-dasharray="3 1"');
    path(curve, '', '#777', 1);
    path(`M${x0 - 10} ${y0 + 1}h7v-4`, '', '#111', 1.5);
});
path('M1100 577L1112 590', '', '#000', 5, 'stroke-dasharray="3 1"');

// Columns
[[1108, 570], [1137, 564], [1162, 563], [1194, 560], [1223, 554], [1252, 550]].forEach(([x, y]) => {
    path(`M${x - 3} 526H${x + 2}V${y}H${x - 3}Z`, '#fff', '#222', 1.2);
    path(`M${x - 3} 526h6`, '', '#000', 6);
});
[953, 1012, 1073, 1104, 1134, 1164, 1195, 1226, 1257].forEach(x => {
    const y = 573 + (x - 845) * 0.066;
    path(`M${x - 3} ${y}V${y + 14}M${x + 3} ${y}V${y + 14}`);
    path(`M${x - 3} ${y}h6`, '', '#000', 5);
});

// Inner wall
path('M1106 527L1278 524C1330 526 1372 548 1373 567C1366 595 1330 604 1290 602L1227 598L1100 588L945 579L845 574', '', '#000', 3);
path('M1335 536V545M1340 538V548M1345 540V551M1352 545V557M1357 549V560M1364 554V566M1345 594V605M1351 591V602M1357 588V598M1367 570V584', '', '#222', 1);
path('M1366 550L1375 566L1369 582', '', '#000', 5, 'stroke-dasharray="7 5"');

// Stage, frames and the covered roof
path('M957 536L1075 534C1094 548 1094 568 1072 579L950 567', '#fff', '#000', 4);
path('M1077 537V575M1080 530V578M1085 560H1097V577M1072 578L1085 585H1110', '', '#222', 1.5);
path('M955 531L1031 529M960 530L952 578M1021 530L1013 582M955 553L1017 555M948 575L1022 582', '', '#000', 5);
path('M965 534L957 574', '', '#000', 2);
path('M960 558L1010 553', '', '#333');
path('M832 523L957 521L946 577L817 570Z', '#444', '#000', 3);
path('M1105 518H1126L1124 526H1104Z', '#333', '#000', 3);
path('M1076 528h6M845 572V581', '', '#000', 6);

// Outer parapet
path('M687 570L830 581L1275 616C1340 620 1404 602 1404 570C1404 545 1345 512 1280 512L708 525', '', '#000', 5);
path('M1382 678L1388 672', '', '#000', 4);

document.getElementById('model').innerHTML = parts.join('');
```
